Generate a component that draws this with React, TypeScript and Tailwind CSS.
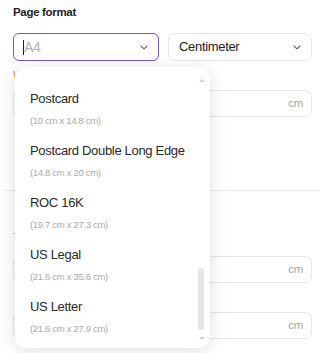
import React from "react";

const F = { fontFamily: '"Liberation Sans", Arial, sans-serif' };

function Chevron({ className = "" }: { className?: string }) {
  return (
    <svg width="8" height="5" viewBox="0 0 8 5" className={className} fill="none">
      <path d="M1 1l3 2.8L7 1" stroke="#666" strokeWidth="1.1" strokeLinecap="round" strokeLinejoin="round" />
    </svg>
  );
}

function CmInput() {
  return (
    <div className="h-[27px] rounded-[7px] border border-[#e6e6e6] flex items-center justify-end pr-[8px]">
      <span className="text-[11.5px] text-[#a8a8a8]">cm</span>
    </div>
  );
}

const items = [
  ["Postcard", "(10 cm x 14.8 cm)"],
  ["Postcard Double Long Edge", "(14.8 cm x 20 cm)"],
  ["ROC 16K", "(19.7 cm x 27.3 cm)"],
  ["US Legal", "(21.6 cm x 35.6 cm)"],
  ["US Letter", "(21.6 cm x 27.9 cm)"],
];

export default function App() {
  return (
    <div className="relative w-[334px] h-[353px] overflow-hidden bg-white tracking-[-0.02em]" style={F}>
      <div className="pt-[6px] px-[13px]">
        <div className="text-[11.5px] font-bold leading-[13px] text-[#222]">Page format</div>
        <div className="mt-[14px] w-[299px] grid grid-cols-[146px_144px] gap-[9px]">
          <div className="h-[28px] rounded-[6px] border-[1.5px] border-[#7552f2] flex items-center pl-[9px] pr-[10px]">
            <span className="w-px h-[15px] bg-[#222]" />
            <span className="text-[14px] tracking-[-0.02em] text-[#b0b0b0]">A4</span>
            <Chevron className="ml-auto" />
          </div>
          <div className="h-[28px] rounded-[7px] border border-[#e6e6e6] flex items-center pl-[10px] pr-[10px]">
            <span className="text-[13px] text-[#222]">Centimeter</span>
            <Chevron className="ml-auto" />
          </div>
        </div>
        <div className="mt-[8px] w-[299px] grid grid-cols-[146px_144px] gap-[9px]">
          <div className="text-[11px] leading-[13px] text-[#e08a2c]">Width</div>
          <div className="text-[11px] leading-[13px] text-[#e08a2c]">Height</div>
        </div>
        <div className="mt-[8px] w-[299px] grid grid-cols-[146px_144px] gap-[9px]">
          <CmInput />
          <CmInput />
        </div>
      </div>
      <div className="mt-[73px] ml-[5px] w-[315px] h-px bg-[#e8e8e8]" />
      <div className="px-[13px]">
        <div className="mt-[40px] text-[11px] leading-[13px] text-[#e8a060]">Top</div>
        <div className="mt-[12px] w-[299px] grid grid-cols-[146px_144px] gap-[9px]">
          <CmInput />
          <CmInput />
        </div>
        <div className="mt-[29px] w-[299px] grid grid-cols-[146px_144px] gap-[9px]">
          <CmInput />
          <CmInput />
        </div>
      </div>

      <div className="absolute left-[15px] top-[67px] w-[195px] h-[281px] rounded-[12px] bg-white shadow-[0_3px_18px_rgba(0,0,0,0.13)] overflow-hidden">
        <div className="pt-[16px] pl-[15px]">
          {items.map(([t, s]) => (
            <div key={t} className="pt-[6px] pb-[7px]">
              <div className="text-[13px] leading-[20px] text-[#2a2a2a] whitespace-nowrap">{t}</div>
              <div className="mt-[5px] text-[9.5px] leading-[14px] text-[#a9a9a9]">{s}</div>
            </div>
          ))}
        </div>
        <div className="absolute left-[184px] top-[12px] w-0 h-0 border-l-[3px] border-r-[3px] border-b-[3px] border-l-transparent border-r-transparent border-b-[#cfcfcf]" />
        <div className="absolute left-[183px] top-[201px] w-[6px] h-[62px] rounded-full bg-[#e6e6e6]" />
        <div className="absolute left-[184px] top-[270px] w-0 h-0 border-l-[3px] border-r-[3px] border-t-[3px] border-l-transparent border-r-transparent border-t-[#cfcfcf]" />
      </div>
    </div>
  );
}
